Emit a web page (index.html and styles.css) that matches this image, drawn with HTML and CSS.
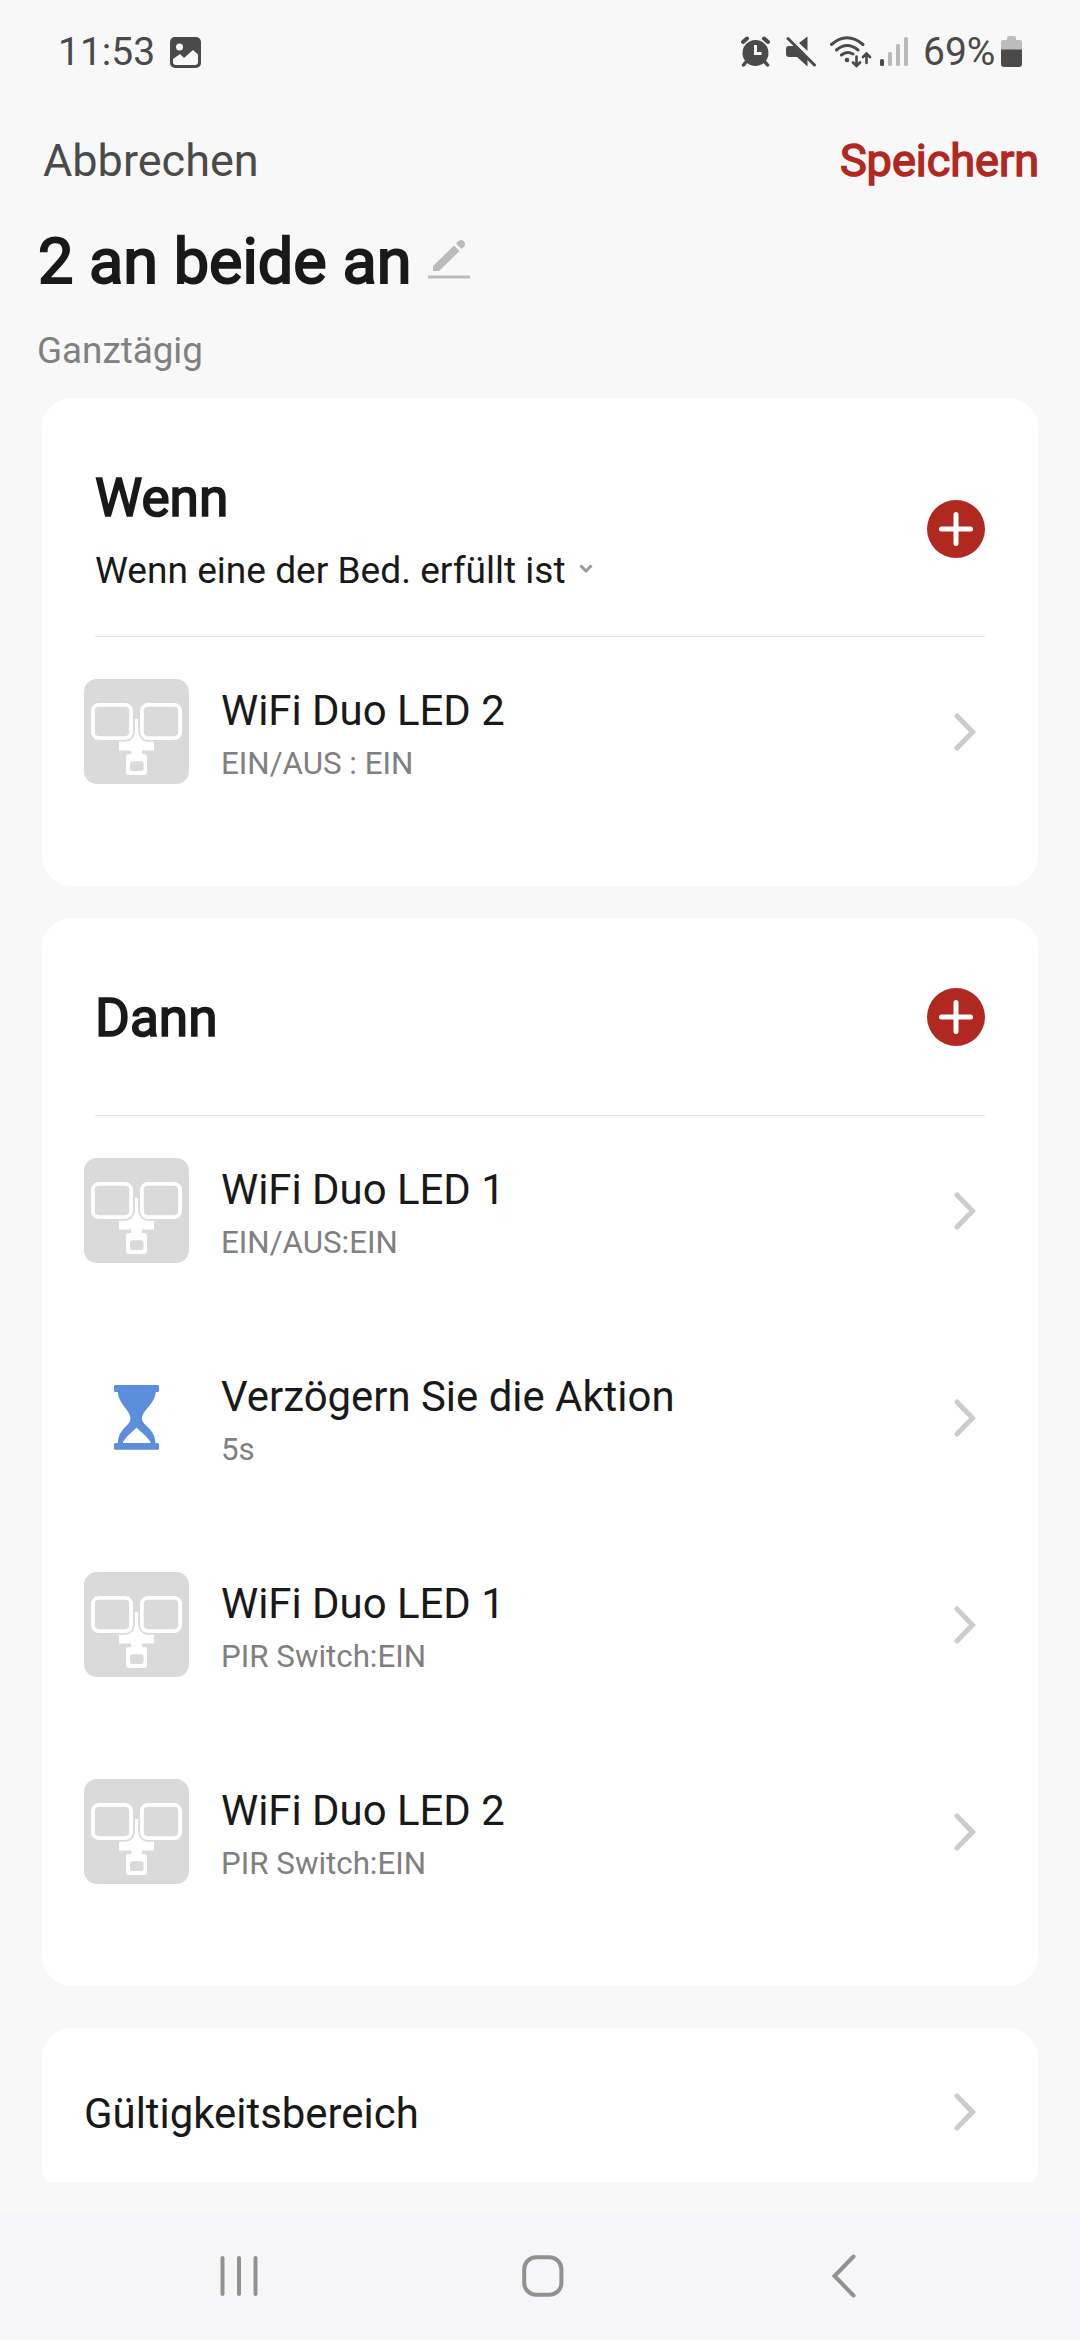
FILE: index.html
```
<!DOCTYPE html>
<html lang="de">
<head>
<meta charset="utf-8">
<title>2 an beide an</title>
<link rel="stylesheet" href="styles.css">
</head>
<body>
<svg class="defs" width="0" height="0">
  <symbol id="lamp" viewBox="0 0 105 105">
    <rect width="105" height="105" rx="13" fill="#dadada"/>
    <g fill="none" stroke="#fff" stroke-width="3.8">
      <rect x="8.9" y="25.8" width="38.2" height="33.3" rx="6"/>
      <rect x="57.9" y="25.8" width="38.2" height="33.3" rx="6"/>
    </g>
    <path fill="#fff" d="M51 40h3.200v12c0 6 4.500 10.800 9.800 10.800h6v8.800H58V75h2a3 3 0 0 1 3 3v15a3 3 0 0 1-3 3H45a3 3 0 0 1-3-3V78a3 3 0 0 1 3-3h2.200v-3.400H35v-8.800h6c5.500 0 10-4.800 10-10.800z"/>
    <rect x="46" y="82.300" width="13.600" height="9.700" rx="2.500" fill="#dadada"/>
  </symbol>
  <symbol id="plus" viewBox="0 0 58 58">
    <circle cx="29" cy="29" r="29" fill="#b0281f"/>
    <path d="M29 14.500v29M14.500 29h29" stroke="#fff" stroke-width="5" stroke-linecap="round"/>
  </symbol>
  <symbol id="next" viewBox="0 0 22 38">
    <path d="M3 3l15.500 16L3 35" fill="none" stroke="#ccc" stroke-width="5" stroke-linecap="round" stroke-linejoin="miter"/>
  </symbol>
</svg>

<div class="screen">
  <header class="status">
    <span>11:53</span>
    <svg class="photo" width="32" height="32" viewBox="0 0 32 32"><rect x="0" y="1" width="31" height="31" rx="5" fill="#4a4a4a"/><circle cx="9.500" cy="11" r="3.500" fill="#f8f8f8"/><path d="M3 23l7-5 4 4 9-8 5 4.500V26q0 3-3 3H6q-3 0-3-3z" fill="#f8f8f8"/></svg>
    <div class="indicators">
      <svg width="30" height="32" viewBox="0 0 30 32"><circle cx="14.500" cy="17" r="13" fill="#4a4a4a"/><path d="M2 6l4-3.500M27 6l-4-3.500" stroke="#4a4a4a" stroke-width="4" stroke-linecap="round"/><path d="M5 26l-2.500 3M24 26l2.500 3" stroke="#4a4a4a" stroke-width="3.500" stroke-linecap="round"/><path d="M14.500 9v8.500h6" fill="none" stroke="#f8f8f8" stroke-width="3"/></svg>
      <svg class="mute" width="31" height="32" viewBox="0 0 31 32"><path d="M13 7L21.500 0.500V15zM3 10h5l13.500 13v7.500L11 21H3q-3 0-3-3v-5q0-3 3-3z" fill="#4a4a4a"/><path d="M2 2.500L28.500 29" stroke="#4a4a4a" stroke-width="3" stroke-linecap="round"/></svg>
      <svg class="wifi" width="42" height="32" viewBox="0 0 42 32"><g fill="none" stroke="#4a4a4a" stroke-width="3" stroke-linecap="round"><path d="M1.500 8.500Q17-5 33 8.500M6.500 14Q17 5 28 14M11.500 19Q17 14.500 23 18"/><path d="M26.500 20.500v9M23 26.500l3.500 3.500 3.500-3.500M36.500 27v-9M33 21l3.500-3.500L40 21" stroke-width="2.600"/></g><circle cx="17" cy="24" r="2.300" fill="#4a4a4a"/></svg>
      <svg class="signal" width="28" height="32" viewBox="0 0 28 32"><g fill="#b9b9b9"><rect x="8" y="16" width="4" height="14" rx="1.500"/><rect x="16" y="8" width="4" height="22" rx="1.500"/><rect x="24" y="1" width="4" height="29" rx="1.500"/></g><rect x="0" y="23" width="4" height="7" rx="1.500" fill="#4a4a4a"/></svg>
      <span class="percent">69%</span>
      <svg width="21" height="32" viewBox="0 0 21 32"><path d="M6 2q0-2 2-2h5q2 0 2 2v2h4q2 0 2 2v8H0V6q0-2 2-2h4z" fill="#bcbcbc"/><path d="M0 13.500h21V28q0 3-3 3H3q-3 0-3-3z" fill="#4a4a4a"/></svg>
    </div>
  </header>

  <nav class="actions"><span>Abbrechen</span><strong>Speichern</strong></nav>

  <div class="title">
    <h1>2 an beide an</h1>
    <svg width="42" height="40" viewBox="0 0 42 40"><path d="M0 38h42" stroke="#bbb" stroke-width="3"/><path d="M5 27L26 6.500l5.500 5.500L11 32H5zM28 4.500l2.500-2.500q3-2 5.200.300t.800 5L33.500 10z" fill="#bbb"/></svg>
  </div>
  <p class="period">Ganztägig</p>

  <main>
    <section class="card">
      <div class="head">
        <div><h2>Wenn</h2><p class="mode">Wenn eine der Bed. erfüllt ist <svg width="14" height="10" viewBox="0 0 14 10"><path d="M1.500 1.500L7 7l5.500-5.500" fill="none" stroke="#999" stroke-width="3"/></svg></p></div>
        <svg class="plus"><use href="#plus"/></svg>
      </div>
      <div class="row"><svg class="thumb"><use href="#lamp"/></svg><div class="text"><h3>WiFi Duo LED 2</h3><p>EIN/AUS : EIN</p></div><svg class="next"><use href="#next"/></svg></div>
    </section>

    <section class="card">
      <div class="head then">
        <h2>Dann</h2>
        <svg class="plus"><use href="#plus"/></svg>
      </div>
      <div class="row"><svg class="thumb"><use href="#lamp"/></svg><div class="text"><h3>WiFi Duo LED 1</h3><p>EIN/AUS:EIN</p></div><svg class="next"><use href="#next"/></svg></div>
      <div class="row"><svg class="thumb" viewBox="0 0 105 105"><g fill="#5b8fdc"><rect x="30" y="20" width="45" height="7" rx="1.500"/><rect x="30" y="78" width="45" height="6.800" rx="1.500"/><path fill-rule="evenodd" d="M33.800 26h37.900c0 13-13.700 19-13.700 27.500C58 61 71.500 63 71.500 79h-37.600C34 63 46.500 61 46.500 53.500 46.500 45 33.800 39 33.800 26zM52.500 62.500C48 67.500 43 70.500 39 77q-.500 1.500 1 1.500h25.500q1.500 0 1-1.500C62.500 70.500 57 67.500 52.500 62.500z"/></g></svg><div class="text"><h3>Verzögern Sie die Aktion</h3><p>5s</p></div><svg class="next"><use href="#next"/></svg></div>
      <div class="row"><svg class="thumb"><use href="#lamp"/></svg><div class="text"><h3>WiFi Duo LED 1</h3><p>PIR Switch:EIN</p></div><svg class="next"><use href="#next"/></svg></div>
      <div class="row"><svg class="thumb"><use href="#lamp"/></svg><div class="text"><h3>WiFi Duo LED 2</h3><p>PIR Switch:EIN</p></div><svg class="next"><use href="#next"/></svg></div>
    </section>

    <section class="card scope"><h3>Gültigkeitsbereich</h3><svg class="next"><use href="#next"/></svg></section>
  </main>

  <footer class="navbar">
    <svg width="40" height="44" viewBox="0 0 40 44"><path d="M3.500 4v36M20 4v36M36.500 4v36" stroke="#919191" stroke-width="4" stroke-linecap="round"/></svg>
    <svg class="home" width="42" height="44" viewBox="0 0 42 44"><rect x="2.200" y="3.200" width="37.200" height="37.600" rx="12" fill="none" stroke="#919191" stroke-width="4"/></svg>
    <svg width="26" height="44" viewBox="0 0 26 44"><path d="M22.500 2.500L3.500 22l19 19.500" fill="none" stroke="#919191" stroke-width="4" stroke-linecap="round"/></svg>
  </footer>
</div>
</body>
</html>
```
FILE: styles.css
```
* { box-sizing: border-box; }
body, h1, h2, h3, p { margin: 0; }
body {
  font-family: Roboto, "Liberation Sans", sans-serif;
  background: #f8f8f8;
  color: #191919;
}
svg { display: block; flex: none; }
.defs { position: absolute; }
h1, h2, h3, strong { font-weight: 400; }

.screen {
  display: flex;
  flex-direction: column;
  width: 1080px;
  height: 2340px;
  overflow: hidden;
}

.status {
  display: flex;
  align-items: center;
  height: 50px;
  margin-top: 27px;
  padding: 0 58px 0 58px;
  font-size: 39px;
  line-height: 50px;
  color: #4a4a4a;
}
.photo { margin-left: 15px; }
.indicators { display: flex; align-items: center; margin-left: auto; }
.mute { margin-left: 15px; }
.wifi { margin-left: 13px; }
.signal { margin-left: 8px; }
.percent { width: 93px; padding-left: 15px; }

.actions {
  display: flex;
  justify-content: space-between;
  margin-top: 54px;
  padding: 0 41px 0 43px;
  font-size: 45px;
  line-height: 60px;
  color: #4a4a4a;
}
.actions strong { color: #b0281f; -webkit-text-stroke: 1.5px #b0281f; }

.title { display: flex; gap: 17px; margin-top: 31px; padding-left: 38px; }
.title h1 { font-size: 63px; line-height: 80px; -webkit-text-stroke: 2px; }
.title svg { margin-top: 17px; }
.period { margin: 26px 0 24px 37px; font-size: 36.8px; line-height: 46px; color: #808080; }

main { height: 1784px; padding: 0 42px; overflow: hidden; }
.card { display: flow-root; background: #fff; border-radius: 30px; }
.card + .card { margin-top: 32px; }
.head {
  display: flex;
  align-items: center;
  justify-content: space-between;
  height: 239px;
  margin: 0 53px 42px;
  padding: 68px 0 42px;
  border-bottom: 1px solid #e4e4e4;
}
.head.then { height: 198px; padding-bottom: 65px; }
.head h2 { font-size: 53.2px; line-height: 64px; -webkit-text-stroke: 1.7px; }
.mode { display: flex; align-items: center; gap: 13px; margin-top: 18px; font-size: 37.1px; line-height: 46px; }
.mode svg { margin-bottom: 4px; }
.plus { width: 58px; height: 58px; margin-bottom: 3px; }

.row { display: flex; align-items: center; height: 105px; margin: 0 62px 102px 42px; }
.thumb { width: 105px; height: 105px; }
.text { flex: 1; margin-left: 32px; padding-top: 6px; }
.card h3 { font-size: 41.9px; line-height: 50px; }
.text p { margin-top: 7px; font-size: 31.3px; line-height: 41px; color: #808080; }
.next { width: 22px; height: 38px; }

.card.scope {
  display: flex;
  align-items: center;
  justify-content: space-between;
  height: 168px;
  margin-top: 42px;
  padding: 0 62px 0 42px;
}
.scope h3 { padding-top: 3px; }

.navbar {
  display: flex;
  align-items: center;
  justify-content: space-between;
  height: 126px;
  margin-top: 32px;
  padding: 0 223px 2px 219px;
  background: #f6f6f8;
}
.home { margin-right: 5px; }
```
